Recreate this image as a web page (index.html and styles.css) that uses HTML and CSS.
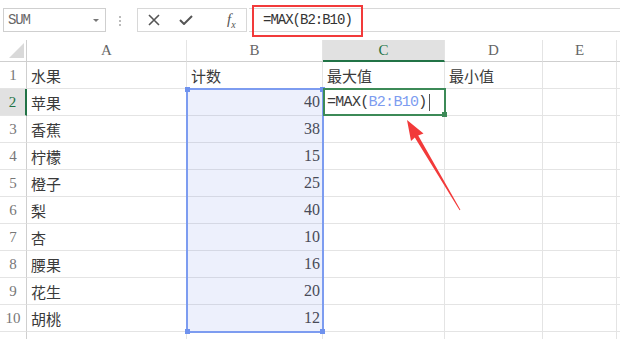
FILE: index.html
```html
<!DOCTYPE html>
<html lang="zh-CN">
<head>
  <meta charset="UTF-8" />
  <title>MAX 函数</title>
  <link rel="stylesheet" href="styles.css">
</head>
<body>
  <div class="page">
    <div class="toolbar">
      <div class="namebox"><span>SUM</span><span class="caret"></span></div>
      <div class="dots"><i></i><i></i><i></i></div>
      <div class="fbuttons">
        <svg class="ico-x" width="12" height="12" viewBox="0 0 12 12"><path d="M1 1 L11 11 M11 1 L1 11" stroke="#555" stroke-width="1.6" fill="none"/></svg>
        <svg class="ico-ok" width="14" height="10" viewBox="0 0 14 10"><path d="M1 5 L5 9 L13 1" stroke="#555" stroke-width="2" fill="none"/></svg>
        <span class="fx"><i>f</i><sub>x</sub></span>
      </div>
      <div class="formula">=MAX(B2:B10)</div>
    </div>

    <div class="sheet">
      <div class="corner"><span class="tri"></span></div>
      <div class="col">A</div>
      <div class="col">B</div>
      <div class="col cur">C</div>
      <div class="col">D</div>
      <div class="col">E</div>
      <div class="col"></div>

      <div class="rh">1</div><div class="c">水果</div><div class="c">计数</div><div class="c">最大值</div><div class="c">最小值</div><div class="c"></div><div class="c"></div>
      <div class="rh cur">2</div><div class="c">苹果</div><div class="c num">40</div><div class="c edit">=MAX(<span class="ref">B2:B10</span>)<span class="cursor"></span></div><div class="c"></div><div class="c"></div><div class="c"></div>
      <div class="rh">3</div><div class="c">香蕉</div><div class="c num">38</div><div class="c"></div><div class="c"></div><div class="c"></div><div class="c"></div>
      <div class="rh">4</div><div class="c">柠檬</div><div class="c num">15</div><div class="c"></div><div class="c"></div><div class="c"></div><div class="c"></div>
      <div class="rh">5</div><div class="c">橙子</div><div class="c num">25</div><div class="c"></div><div class="c"></div><div class="c"></div><div class="c"></div>
      <div class="rh">6</div><div class="c">梨</div><div class="c num">40</div><div class="c"></div><div class="c"></div><div class="c"></div><div class="c"></div>
      <div class="rh">7</div><div class="c">杏</div><div class="c num">10</div><div class="c"></div><div class="c"></div><div class="c"></div><div class="c"></div>
      <div class="rh">8</div><div class="c">腰果</div><div class="c num">16</div><div class="c"></div><div class="c"></div><div class="c"></div><div class="c"></div>
      <div class="rh">9</div><div class="c">花生</div><div class="c num">20</div><div class="c"></div><div class="c"></div><div class="c"></div><div class="c"></div>
      <div class="rh">10</div><div class="c">胡桃</div><div class="c num">12</div><div class="c"></div><div class="c"></div><div class="c"></div><div class="c"></div>
      <div class="rh"></div><div class="c"></div><div class="c"></div><div class="c"></div><div class="c"></div><div class="c"></div><div class="c"></div>
    </div>

    <!-- 标注层 -->
    <div class="redbox"></div>
    <div class="selection"><i class="h tl"></i><i class="h tr"></i><i class="h bl"></i><i class="h br"></i></div>
    <div class="active"><i class="gh"></i></div>
    <svg class="arrow" width="620" height="339" viewBox="0 0 620 339">
      <polygon fill="#f23a3a" points="407,120 423.5,133.4 418.2,135.6 460.4,209.8 459.6,210.2 414.8,137.6 411,141"/>
    </svg>
  </div>
</body>
</html>
```

FILE: styles.css
```css
body {
  margin: 0;
  background: #fff;
  font-family: 'Liberation Serif', 'Noto Sans CJK SC', serif;
  color: #333;
}

.page {
  position: relative;
  width: 620px;
  height: 339px;
  overflow: hidden;
}

/* 编辑栏 */
.toolbar {
  display: flex;
  align-items: flex-start;
  height: 40px;
  padding-top: 8px;
  box-sizing: border-box;
}

.namebox {
  margin-left: 3px;
  width: 103px;
  height: 24px;
  box-sizing: border-box;
  border: 1px solid #cfcfcf;
  display: flex;
  align-items: center;
  justify-content: space-between;
  padding: 0 6px 0 4px;
  font-family: 'Liberation Mono', monospace;
  font-size: 14px;
  letter-spacing: -1.2px;
  color: #666;
}

.caret {
  width: 0;
  height: 0;
  border-left: 3px solid transparent;
  border-right: 3px solid transparent;
  border-top: 3px solid #777;
}

.dots {
  margin-left: 13px;
  margin-top: 8px;
  display: flex;
  flex-direction: column;
  gap: 2px;
}

.dots i {
  width: 2px;
  height: 2px;
  background: #bbb;
}

.fbuttons {
  margin-left: 16px;
  width: 110px;
  height: 24px;
  box-sizing: border-box;
  border: 1px solid #d8d8d8;
  display: flex;
  align-items: center;
}

.ico-x { margin-left: 10px; }
.ico-ok { margin-left: 19px; }

.fx {
  margin-left: 34px;
  font-family: 'Liberation Serif', serif;
  font-size: 15px;
  color: #555;
}

.fx sub {
  font-size: 10px;
  font-style: italic;
}

.formula {
  flex: 1;
  margin-left: 2px;
  height: 24px;
  box-sizing: border-box;
  border-top: 1px solid #d8d8d8;
  border-bottom: 1px solid #d8d8d8;
  padding-left: 14px;
  line-height: 22px;
  font-family: 'Liberation Mono', monospace;
  font-size: 14px;
  letter-spacing: -1px;
  color: #333;
}

/* 表格 */
.sheet {
  display: grid;
  grid-template-columns: 27px 160px 136px 122px 98px 74px 1fr;
  grid-template-rows: 22px repeat(11, 27px);
}

.sheet > div {
  box-sizing: border-box;
  border-right: 1px solid #e4e4e4;
  border-bottom: 1px solid #e4e4e4;
  display: flex;
  align-items: center;
  white-space: nowrap;
  overflow: hidden;
}

.corner {
  position: relative;
  border-right-color: #cfcfcf !important;
  border-bottom-color: #cfcfcf !important;
}

.tri {
  position: absolute;
  right: 2px;
  bottom: 3px;
  width: 0;
  height: 0;
  border-left: 15px solid transparent;
  border-bottom: 15px solid #d9d9d9;
}

.col {
  justify-content: center;
  font-size: 15px;
  color: #666;
  border-bottom-color: #cfcfcf !important;
}

.col.cur {
  background: #e1e1e1;
  color: #217346;
  border-bottom: 2px solid #217346 !important;
}

.rh {
  justify-content: center;
  font-size: 15px;
  color: #777;
  border-right-color: #cfcfcf !important;
}

.rh.cur {
  background: #e1e1e1;
  color: #217346;
  border-right: 2px solid #217346 !important;
}

.c {
  padding: 0 4px;
  font-size: 15px;
  color: #3a3a3a;
}

.num {
  justify-content: flex-end;
  padding-right: 2px;
  font-size: 16px;
  color: #444;
}

.edit {
  font-family: 'Liberation Mono', monospace;
  font-size: 15px;
  letter-spacing: -0.7px;
  padding-left: 4px;
}

.ref { color: #7d9cf0; }

.cursor {
  display: inline-block;
  width: 1px;
  height: 17px;
  margin-left: 2px;
  background: #555;
}

/* 标注和选区 */
.redbox {
  position: absolute;
  left: 252px;
  top: 5px;
  width: 111px;
  height: 32px;
  box-sizing: border-box;
  border: 2px solid #f23a3a;
}

.selection {
  position: absolute;
  left: 186px;
  top: 88px;
  width: 138px;
  height: 245px;
  box-sizing: border-box;
  border: 2px solid #7d9cf0;
  background: rgba(110, 135, 230, 0.12);
}

.h {
  position: absolute;
  width: 5px;
  height: 5px;
  background: #6f92ee;
}

.tl { left: -3px; top: -3px; }
.tr { right: -3px; top: -3px; }
.bl { left: -3px; bottom: -3px; }
.br { right: -3px; bottom: -3px; }

.active {
  position: absolute;
  left: 323px;
  top: 88px;
  width: 123px;
  height: 28px;
  box-sizing: border-box;
  border: 2px solid #3c8a57;
}

.gh {
  position: absolute;
  right: -3px;
  bottom: -3px;
  width: 5px;
  height: 5px;
  background: #3c8a57;
}

.arrow {
  position: absolute;
  left: 0;
  top: 0;
  pointer-events: none;
}
```
